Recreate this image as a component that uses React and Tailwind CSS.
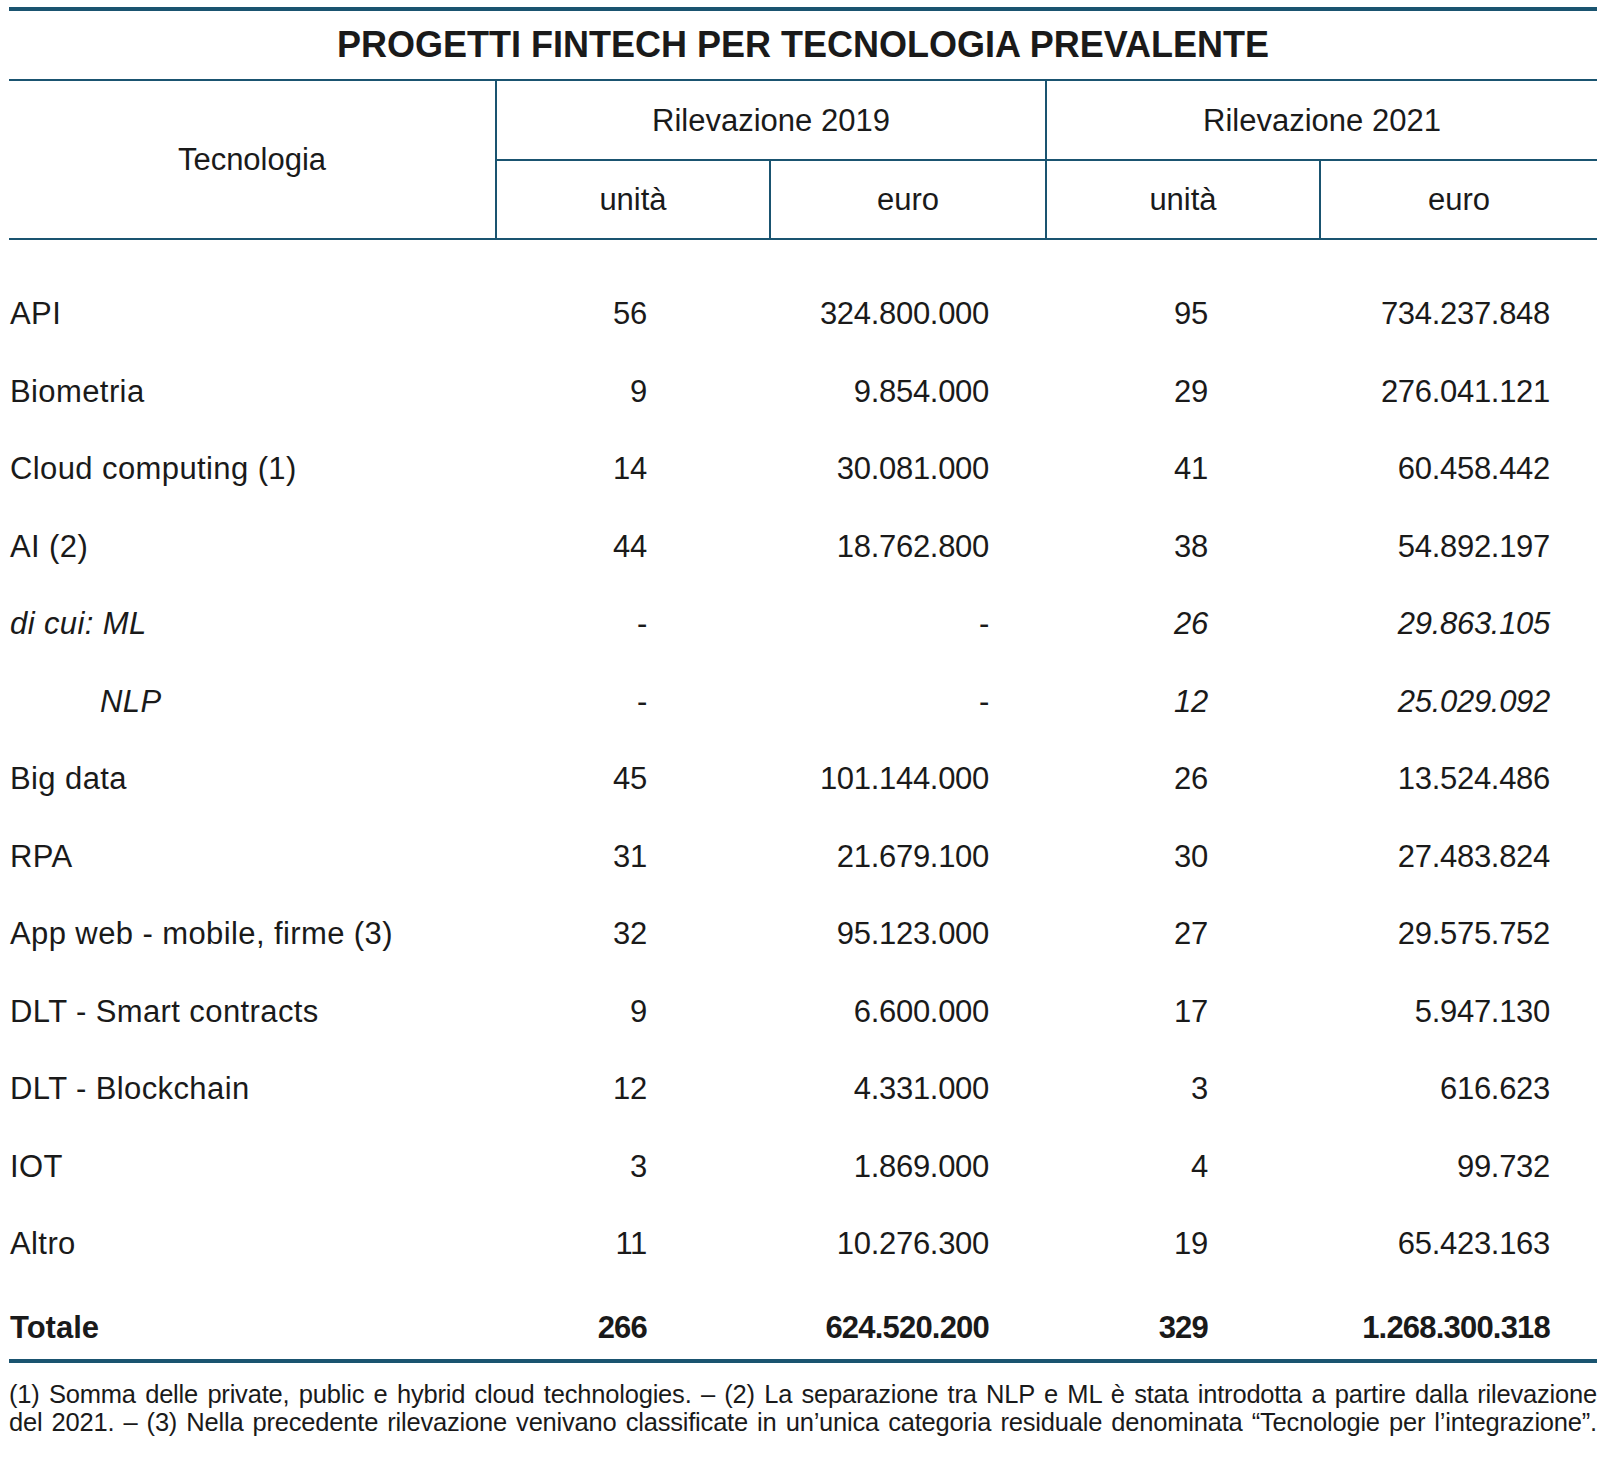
import React from 'react';

const rows = [
  { name: 'API', u19: '56', e19: '324.800.000', u21: '95', e21: '734.237.848' },
  { name: 'Biometria', u19: '9', e19: '9.854.000', u21: '29', e21: '276.041.121' },
  { name: 'Cloud computing (1)', u19: '14', e19: '30.081.000', u21: '41', e21: '60.458.442' },
  { name: 'AI (2)', u19: '44', e19: '18.762.800', u21: '38', e21: '54.892.197' },
  { name: 'di cui: ML', u19: '-', e19: '-', u21: '26', e21: '29.863.105', italic: true },
  { name: 'NLP', u19: '-', e19: '-', u21: '12', e21: '25.029.092', italic: true, indent: true },
  { name: 'Big data', u19: '45', e19: '101.144.000', u21: '26', e21: '13.524.486' },
  { name: 'RPA', u19: '31', e19: '21.679.100', u21: '30', e21: '27.483.824' },
  { name: 'App web - mobile, firme (3)', u19: '32', e19: '95.123.000', u21: '27', e21: '29.575.752' },
  { name: 'DLT - Smart contracts', u19: '9', e19: '6.600.000', u21: '17', e21: '5.947.130' },
  { name: 'DLT - Blockchain', u19: '12', e19: '4.331.000', u21: '3', e21: '616.623' },
  { name: 'IOT', u19: '3', e19: '1.869.000', u21: '4', e21: '99.732' },
  { name: 'Altro', u19: '11', e19: '10.276.300', u21: '19', e21: '65.423.163' }
];

const cols = 'grid grid-cols-[486px_274px_276px_274px_278px]';

function DataRow({ row }) {
  const it = row.italic ? 'italic' : '';
  return (
    <div className={`${cols} h-[77.5px] items-center tracking-[-0.3px]`}>
      <div className={`${it} tracking-[0.4px] ${row.indent ? 'pl-[91px]' : 'pl-[1px]'}`}>{row.name}</div>
      <div className="text-right pr-[122px]">{row.u19}</div>
      <div className="text-right pr-[56px]">{row.e19}</div>
      <div className={`text-right pr-[111px] ${it}`}>{row.u21}</div>
      <div className={`text-right pr-[47px] ${it}`}>{row.e21}</div>
    </div>
  );
}

export default function App() {
  return (
    <div className="bg-white w-[1612px] h-[1464px] pt-[7px] font-['Liberation_Sans',Arial,sans-serif] text-[#1a1a1a]">
      <div className="ml-[9px] w-[1588px]">
        <div className="border-t-4 border-[#1a5470] h-[72px] flex items-center justify-center">
          <h1 className="text-[36px] font-bold leading-none">PROGETTI FINTECH PER TECNOLOGIA PREVALENTE</h1>
        </div>

        <div className={`${cols} grid-rows-[80px_77px] border-t-2 border-b-2 border-[#1a5470] text-[31px] leading-none`}>
          <div className="row-span-2 flex items-center justify-center">Tecnologia</div>
          <div className="col-span-2 border-l-2 border-b-2 border-[#1a5470] flex items-center justify-center">Rilevazione 2019</div>
          <div className="col-span-2 border-l-2 border-b-2 border-[#1a5470] flex items-center justify-center">Rilevazione 2021</div>
          <div className="border-l-2 border-[#1a5470] flex items-center justify-center">unità</div>
          <div className="border-l-2 border-[#1a5470] flex items-center justify-center">euro</div>
          <div className="border-l-2 border-[#1a5470] flex items-center justify-center">unità</div>
          <div className="border-l-2 border-[#1a5470] flex items-center justify-center">euro</div>
        </div>

        <div className="pt-[34.75px] text-[31px] leading-none">
          {rows.map(r => <DataRow key={r.name} row={r} />)}
          <div className={`${cols} h-[76.75px] items-center pt-[13px] font-bold tracking-[-0.8px]`}>
            <div className="pl-[1px] tracking-normal">Totale</div>
            <div className="text-right pr-[122px]">266</div>
            <div className="text-right pr-[56px]">624.520.200</div>
            <div className="text-right pr-[111px]">329</div>
            <div className="text-right pr-[47px]">1.268.300.318</div>
          </div>
        </div>

        <div className="border-t-4 border-[#1a5470] pt-[17px] text-[25.5px] leading-[28px] tracking-[-0.2px]">
          <div className="text-justify [text-align-last:justify] whitespace-nowrap">
            (1) Somma delle private, public e hybrid cloud technologies. – (2) La separazione tra NLP e ML è stata introdotta a partire dalla rilevazione
          </div>
          <div className="text-justify [text-align-last:justify] whitespace-nowrap">
            del 2021. – (3) Nella precedente rilevazione venivano classificate in un’unica categoria residuale denominata “Tecnologie per l’integrazione”.
          </div>
        </div>
      </div>
    </div>
  );
}
